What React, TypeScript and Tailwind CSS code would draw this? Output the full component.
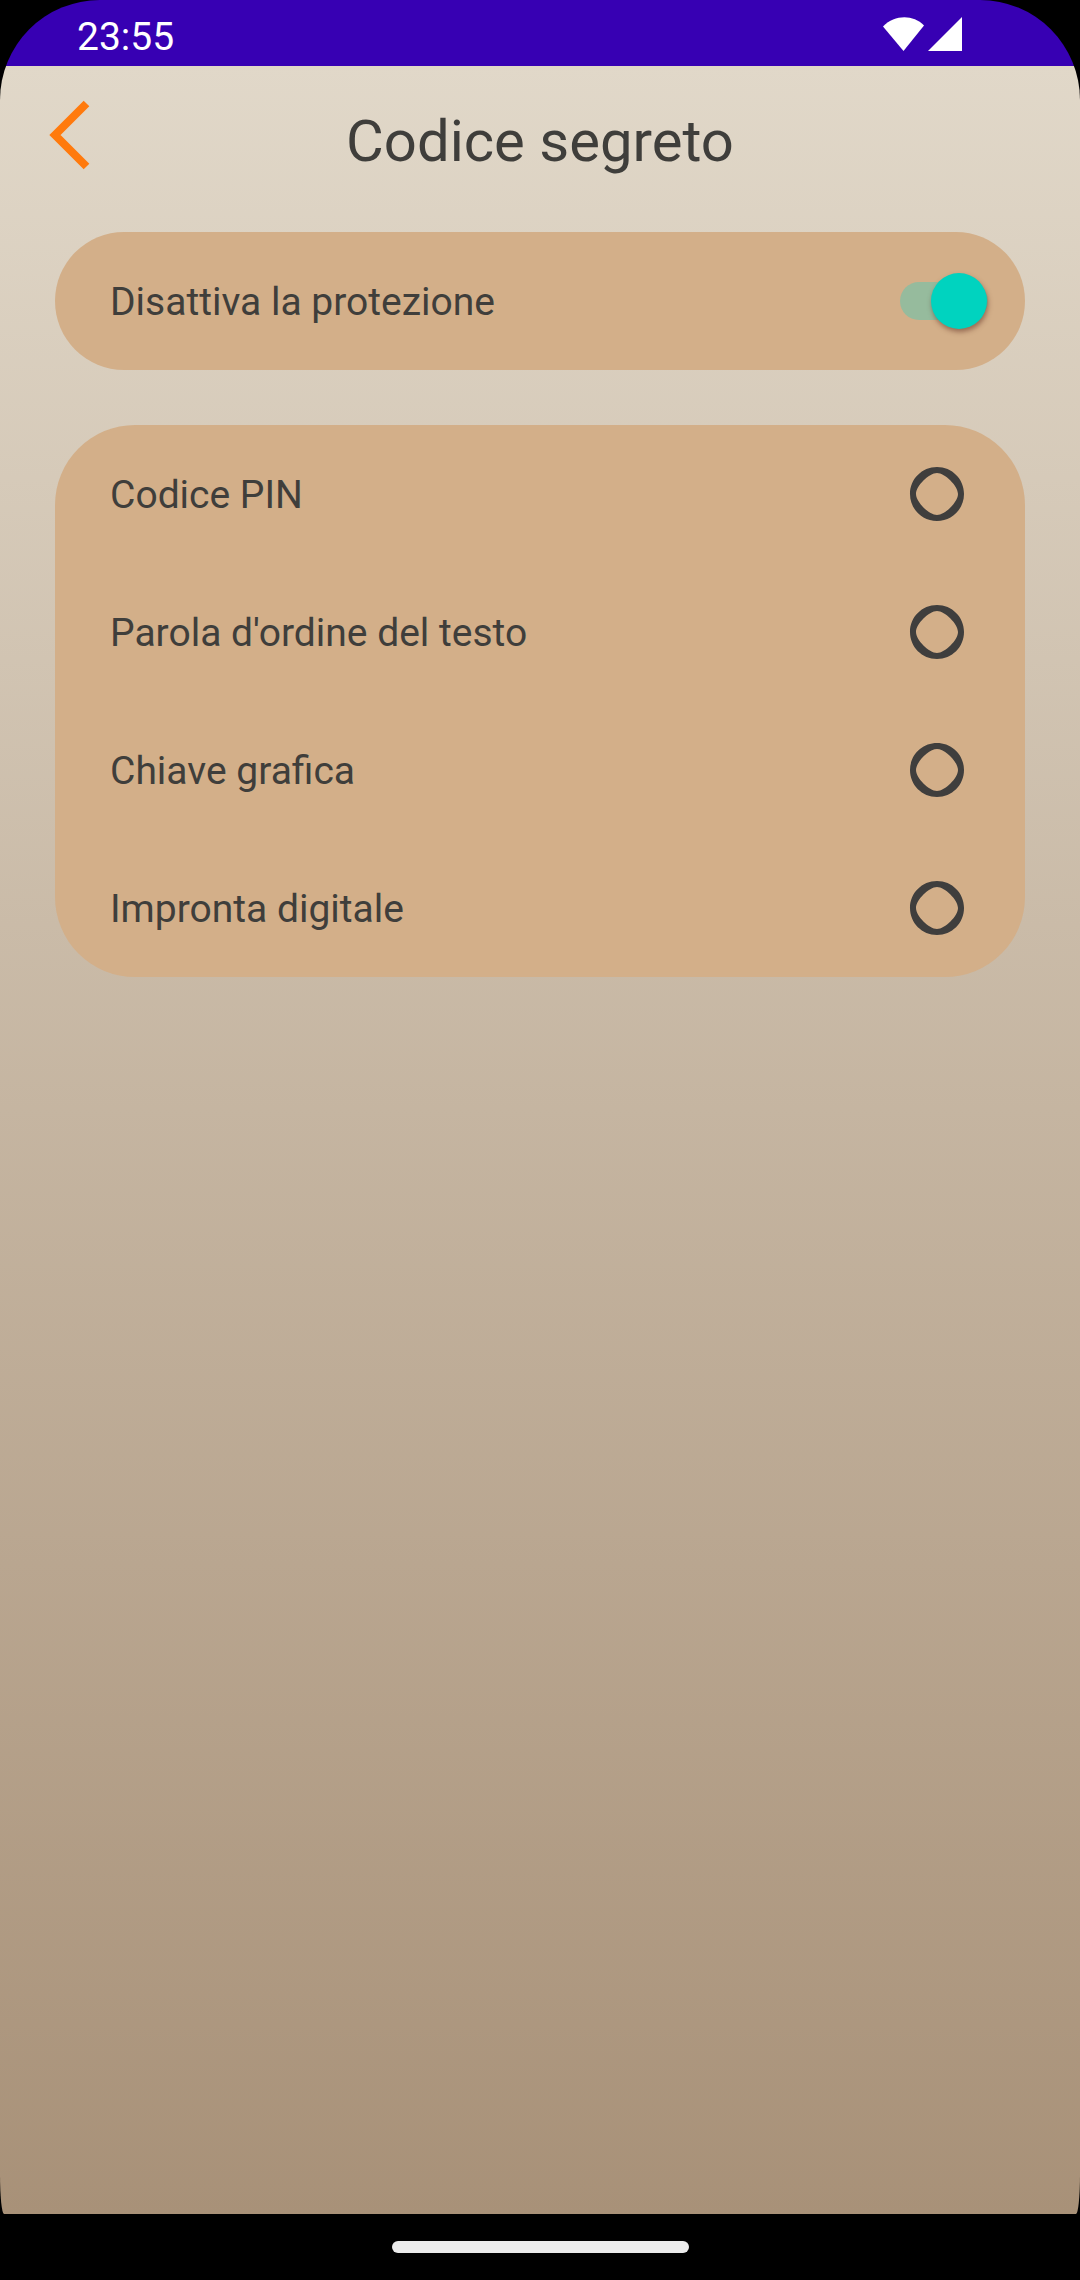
const rows = ["Codice PIN", "Parola d'ordine del testo", "Chiave grafica", "Impronta digitale"];

function Squircle() {
  return (
    <svg width="56" height="56" viewBox="0 0 56 56" className="shrink-0">
      <path
        fillRule="evenodd"
        fill="#3f3e3d"
        d="M28 1C43 1 55 13 55 28C55 43 43 55 28 55C13 55 1 43 1 28C1 13 13 1 28 1ZM28 7C36 7 49 20 49 28C49 36 36 49 28 49C20 49 7 36 7 28C7 20 20 7 28 7Z"
      />
    </svg>
  );
}

export default function App() {
  return (
    <div className="w-[1080px] h-[2280px] bg-black overflow-hidden font-['Roboto',sans-serif]">
      <div className="h-[2214px] overflow-hidden rounded-t-[100px] rounded-b-[4px_40px]">
        <div className="h-[66px] bg-[#3700b3] flex items-center justify-between pl-[77px] pr-[116px] text-white">
          <span className="text-[39px] leading-none mt-[8px]">23:55</span>
          <div className="flex items-center gap-[3px] pt-[2px]">
            <svg width="42" height="36" viewBox="0 0 42 36">
              <path d="M0 10.5C12 -1.5 30 -1.5 41 9.5L20.5 35Z" fill="#fff" />
            </svg>
            <svg width="36" height="36" viewBox="0 0 36 36">
              <path d="M34 1V35H0Z" fill="#fff" />
            </svg>
          </div>
        </div>

        <div className="h-[2148px] bg-gradient-to-b from-[#e1d8c9] to-[#a89178]">
          <div className="h-[166px] relative flex items-center justify-center pb-[16px] text-[58px] text-[#3f3e3b]">
            <svg width="44" height="72" viewBox="0 0 44 72" className="absolute left-[47px] top-[34px]">
              <path d="M39.5 3.5L8 35L39.5 66.5" fill="none" stroke="#ff7a0d" strokeWidth="8" />
            </svg>
            Codice segreto
          </div>

          <div className="flex flex-col gap-[55px] px-[55px] text-[#3f3e3b] text-[39px]">
            <div className="h-[138px] rounded-full bg-[#d3af89] flex items-center justify-between pl-[55px] pr-[37px]">
              <span className="pt-[2px]">Disattiva la protezione</span>
              <div className="relative w-[88px] h-[38px] rounded-full bg-[#96bb9d]">
                <div className="absolute right-[1px] top-[-9px] w-[56px] h-[56px] rounded-full bg-[#00d3bf] shadow-[1px_3px_5px_rgba(90,40,30,0.5)]" />
              </div>
            </div>

            <div className="rounded-[80px] bg-[#d3af89]">
              {rows.map((label) => (
                <div key={label} className="h-[138px] flex items-center justify-between pl-[55px] pr-[60px]">
                  <span className="pt-[2px]">{label}</span>
                  <Squircle />
                </div>
              ))}
            </div>
          </div>
        </div>
      </div>

      <div className="h-[66px] flex items-center justify-center">
        <div className="w-[297px] h-[12px] rounded-full bg-[#ececec]" />
      </div>
    </div>
  );
}
